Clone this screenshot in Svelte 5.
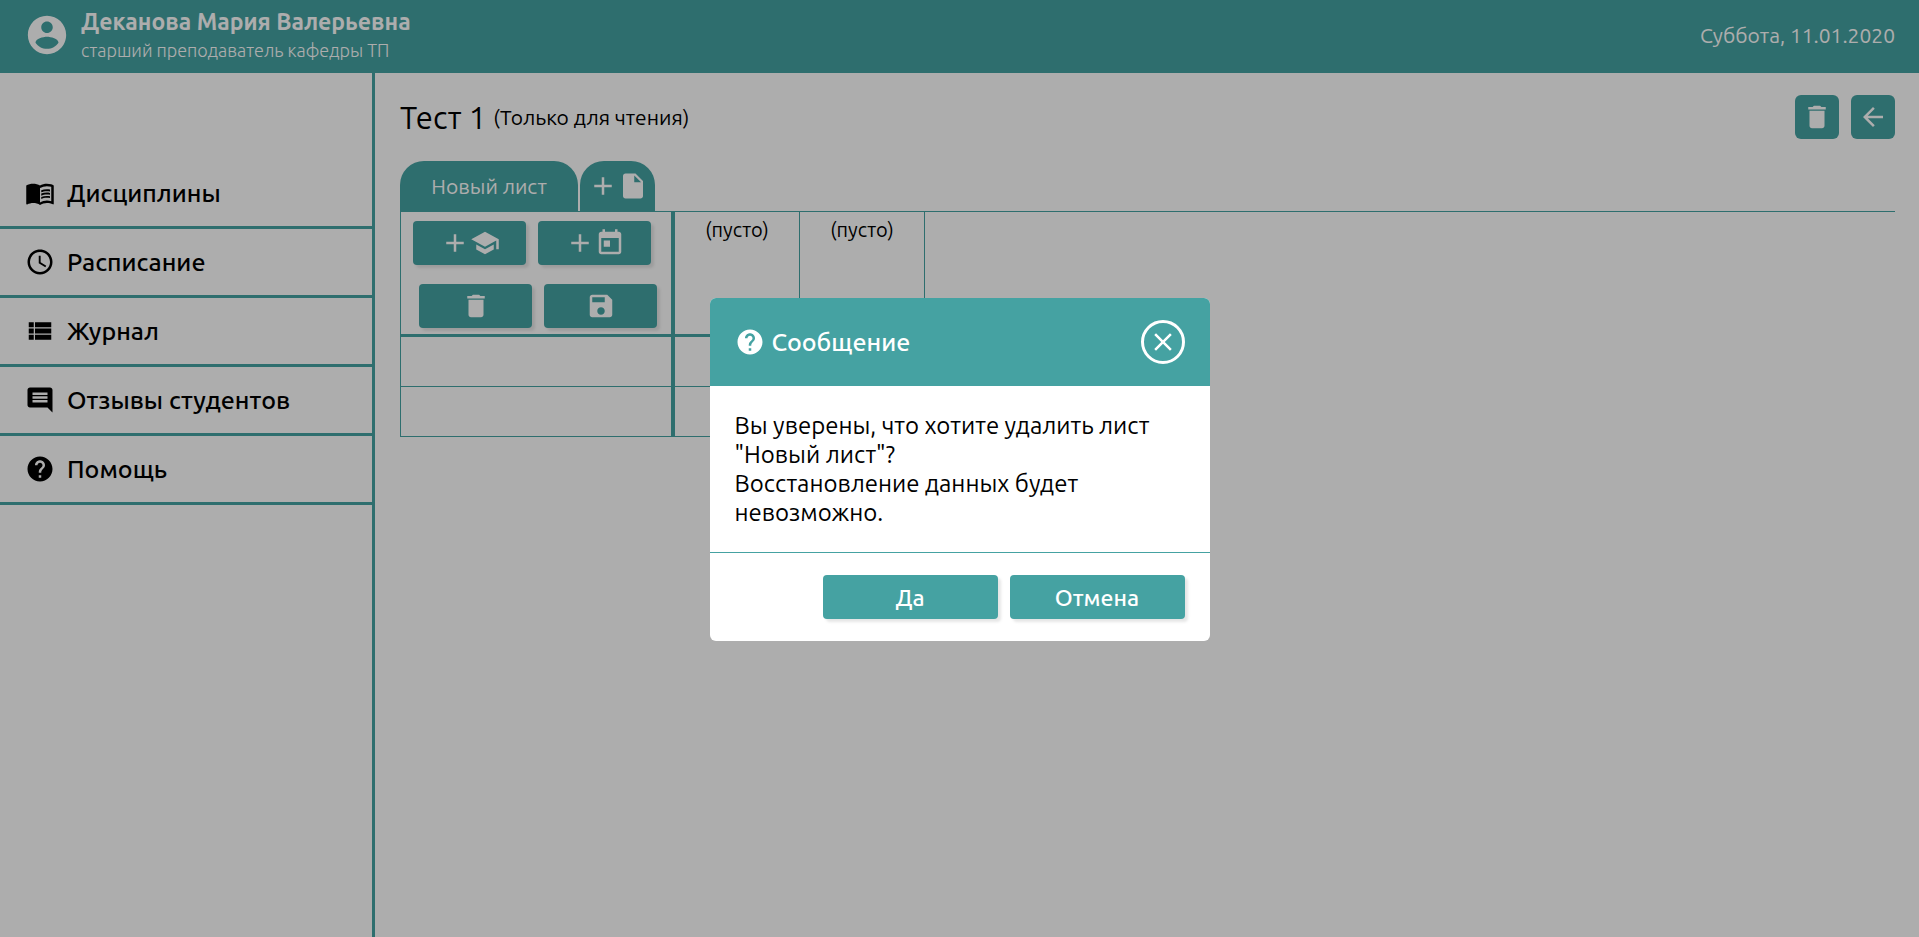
<script>
  const icons = {
    account: 'M12 2C6.480 2 2 6.480 2 12s4.480 10 10 10 10-4.480 10-10S17.520 2 12 2zm0 3c1.660 0 3 1.340 3 3s-1.340 3-3 3-3-1.340-3-3 1.340-3 3-3zm0 14.200c-2.500 0-4.710-1.280-6-3.220.03-1.990 4-3.080 6-3.080 1.990 0 5.970 1.090 6 3.080-1.290 1.940-3.500 3.220-6 3.220z',
    book: 'M21 5c-1.110-.35-2.330-.5-3.500-.5-1.950 0-4.050.4-5.500 1.500-1.450-1.100-3.550-1.500-5.500-1.500S2.450 4.900 1 6v14.650c0 .25.25.5.5.5.1 0 .15-.05.25-.05C3.100 20.450 5.050 20 6.500 20c1.950 0 4.050.4 5.500 1.500 1.350-.85 3.800-1.500 5.500-1.500 1.650 0 3.350.3 4.750 1.050.1.05.15.05.25.05.25 0 .5-.25.5-.5V6c-.6-.45-1.250-.75-2-1zm0 13.500c-1.100-.35-2.300-.5-3.500-.5-1.700 0-4.150.65-5.500 1.500V8c1.350-.85 3.800-1.500 5.500-1.500 1.200 0 2.400.15 3.500.5v11.500zM17.500 10.500c.88 0 1.730.09 2.500.26V9.240c-.79-.15-1.640-.24-2.500-.24-1.700 0-3.240.29-4.500.83v1.660c1.130-.64 2.700-.99 4.500-.99zM13 12.490v1.660c1.130-.64 2.700-.99 4.500-.99.88 0 1.730.09 2.500.26V11.900c-.79-.15-1.640-.24-2.500-.24-1.700 0-3.240.3-4.500.83zM17.500 14.330c-1.700 0-3.240.29-4.500.83v1.660c1.130-.64 2.700-.99 4.500-.99.88 0 1.730.09 2.500.26v-1.520c-.79-.16-1.640-.24-2.500-.24z',
    clock: 'M11.990 2C6.470 2 2 6.480 2 12s4.470 10 9.990 10C17.520 22 22 17.520 22 12S17.520 2 11.990 2zM12 20c-4.420 0-8-3.580-8-8s3.580-8 8-8 8 3.580 8 8-3.580 8-8 8zm.5-13H11v6l5.250 3.150.75-1.230-4.500-2.670z',
    list: 'M3 9h4V5H3v4zm0 5h4v-4H3v4zm0 5h4v-4H3v4zm5-5h13v-4H8v4zm0 5h13v-4H8v4zM8 5v4h13V5H8z',
    comment: 'M21.990 4c0-1.100-.89-2-1.990-2H4c-1.100 0-2 .9-2 2v12c0 1.100.9 2 2 2h14l4 4-.01-18zM18 14H6v-2h12v2zm0-3H6V9h12v2zm0-3H6V6h12v2z',
    help: 'M12 2C6.480 2 2 6.480 2 12s4.480 10 10 10 10-4.480 10-10S17.520 2 12 2zm1 17h-2v-2h2v2zm2.070-7.750l-.9.920C13.450 12.900 13 13.500 13 15h-2v-.5c0-1.100.45-2.100 1.170-2.830l1.240-1.260c.37-.36.59-.86.59-1.410 0-1.100-.9-2-2-2s-2 .9-2 2H8c0-2.210 1.790-4 4-4s4 1.790 4 4c0 .88-.36 1.680-.93 2.250z',
    trash: 'M6 19c0 1.100.9 2 2 2h8c1.100 0 2-.9 2-2V7H6v12zM19 4h-3.500l-1-1h-5l-1 1H5v2h14V4z',
    back: 'M20 11H7.830l5.590-5.590L12 4l-8 8 8 8 1.410-1.410L7.830 13H20v-2z',
    plus: 'M19 13h-6v6h-2v-6H5v-2h6V5h2v6h6v2z',
    file: 'M14 2H6c-1.100 0-2 .9-2 2v16c0 1.100.9 2 2 2h12c1.100 0 2-.9 2-2V8l-6-6zm-1 7V3.500L18.500 9H13z',
    school: 'M5 13.180v4L12 21l7-3.820v-4L12 17l-7-3.820zM12 3L1 9l11 6 9-4.910V17h2V9L12 3z',
    event: 'M19 3h-1V1h-2v2H8V1H6v2H5c-1.110 0-1.990.9-1.990 2L3 19c0 1.100.89 2 2 2h14c1.100 0 2-.9 2-2V5c0-1.100-.9-2-2-2zm0 16H5V8h14v11zM7 10h5v5H7z',
    save: 'M17 3H5c-1.110 0-2 .9-2 2v14c0 1.100.89 2 2 2h14c1.100 0 2-.9 2-2V7l-4-4zm-5 16c-1.660 0-3-1.340-3-3s1.340-3 3-3 3 1.340 3 3-1.340 3-3 3zm3-10H5V5h10v4z',
    close: 'M19 6.410L17.590 5 12 10.590 6.410 5 5 6.410 10.590 12 5 17.590 6.410 19 12 13.410 17.590 19 19 17.590 13.410 12z'
  };

  const menu = [
    ['book', 'Дисциплины'],
    ['clock', 'Расписание'],
    ['list', 'Журнал'],
    ['comment', 'Отзывы студентов'],
    ['help', 'Помощь']
  ];

  let open = $state(true);
  const close = () => (open = false);
</script>

{#snippet icon(name, size = 30)}
  <svg width={size} height={size} viewBox="0 0 24 24" fill="currentColor" aria-hidden="true">
    <path d={icons[name]} />
  </svg>
{/snippet}

<div class="page">
  <header class="topbar">
    <div class="user">
      {@render icon('account', 46)}
      <div class="person">
        <div class="name">Деканова Мария Валерьевна</div>
        <div class="role">старший преподаватель кафедры ТП</div>
      </div>
    </div>
    <div class="date">Суббота, 11.01.2020</div>
  </header>

  <div class="body">
    <nav>
      {#each menu as [glyph, label]}
        <a href="#{glyph}">{@render icon(glyph)}<span>{label}</span></a>
      {/each}
    </nav>

    <main>
      <div class="heading">
        <h1>Тест 1</h1>
        <span class="note">(Только для чтения)</span>
        <div class="tools">
          <button class="square" aria-label="Удалить">{@render icon('trash')}</button>
          <button class="square" aria-label="Назад">{@render icon('back')}</button>
        </div>
      </div>

      <div class="tabs">
        <button class="tab">Новый лист</button>
        <button class="tab add" aria-label="Добавить лист">{@render icon('plus')}{@render icon('file')}</button>
      </div>

      <table>
        <thead>
          <tr>
            <th class="corner">
              <div class="actions">
                <button class="action" aria-label="Добавить студента">{@render icon('plus')}{@render icon('school')}</button>
                <button class="action" aria-label="Добавить дату">{@render icon('plus')}{@render icon('event')}</button>
              </div>
              <div class="actions second">
                <button class="action" aria-label="Удалить лист">{@render icon('trash')}</button>
                <button class="action" aria-label="Сохранить">{@render icon('save')}</button>
              </div>
            </th>
            <th>(пусто)</th>
            <th>(пусто)</th>
          </tr>
        </thead>
        <tbody>
          <tr><td class="student"></td><td></td><td></td></tr>
          <tr><td class="student"></td><td></td><td></td></tr>
        </tbody>
      </table>
    </main>
  </div>
</div>

{#if open}
  <div class="overlay">
    <div class="dialog" role="dialog" aria-modal="true" aria-labelledby="dialog-title">
      <div class="dialog-head">
        {@render icon('help')}
        <h2 id="dialog-title">Сообщение</h2>
        <button class="close" aria-label="Закрыть" onclick={close}>{@render icon('close')}</button>
      </div>
      <p>Вы уверены, что хотите удалить лист "Новый лист"?<br />Восстановление данных будет невозможно.</p>
      <div class="dialog-foot">
        <button onclick={close}>Да</button>
        <button onclick={close}>Отмена</button>
      </div>
    </div>
  </div>
{/if}

<style>
  :global(body) {
    margin: 0;
  }
  .page,
  .overlay {
    --teal: #45a2a2;
    font-family: Ubuntu, 'Noto Sans', sans-serif;
    color: #000;
    box-sizing: border-box;
  }
  .page {
    display: flex;
    flex-direction: column;
    min-height: 100vh;
    background: #fff;
  }
  svg {
    display: block;
    flex: none;
  }
  button {
    display: flex;
    align-items: center;
    justify-content: center;
    box-sizing: border-box;
    padding: 0;
    border: 0;
    font-family: inherit;
    color: #fff;
    background: var(--teal);
    cursor: pointer;
  }
  .topbar {
    display: flex;
    align-items: center;
    justify-content: space-between;
    box-sizing: border-box;
    height: 73px;
    padding: 0 24px 3px;
    color: #fff;
    background: var(--teal);
  }
  .user {
    display: flex;
    align-items: center;
    gap: 11px;
  }
  .person {
    padding-top: 2px;
  }
  .name {
    font-size: 23px;
    line-height: 28px;
    font-weight: 600;
  }
  .role {
    font-size: 18px;
    line-height: 28px;
    font-weight: 300;
  }
  .date {
    font-size: 21px;
  }
  .body {
    display: flex;
    flex: 1;
  }
  nav {
    flex: none;
    width: 372px;
    padding-top: 87px;
    border-right: 3px solid var(--teal);
  }
  nav a {
    display: flex;
    align-items: center;
    gap: 12px;
    height: 66px;
    padding-left: 25px;
    border-bottom: 3px solid var(--teal);
    color: inherit;
    font-size: 25px;
    font-weight: 500;
    text-decoration: none;
  }
  main {
    flex: 1;
    min-width: 0;
    padding: 22px 24px 22px 25px;
  }
  .heading {
    display: flex;
    align-items: center;
    gap: 7px;
    height: 44px;
  }
  h1 {
    margin: 0;
    font-size: 31px;
    font-weight: 400;
  }
  .note {
    font-size: 21px;
  }
  .tools {
    display: flex;
    gap: 12px;
    margin-left: auto;
  }
  .square {
    width: 44px;
    height: 44px;
    border-radius: 6px;
  }
  .tabs {
    display: flex;
    gap: 2px;
    margin-top: 22px;
    border-bottom: 1px solid var(--teal);
  }
  .tab {
    width: 178px;
    height: 50px;
    border-radius: 24px 24px 0 0;
    font-size: 21px;
  }
  .add {
    width: 75px;
  }
  table {
    border-collapse: separate;
    border-spacing: 0;
    border-left: 1px solid var(--teal);
  }
  th,
  td {
    box-sizing: border-box;
    width: 125px;
    padding: 0;
    border-right: 1px solid var(--teal);
    border-bottom: 1px solid var(--teal);
  }
  th {
    padding-top: 4px;
    border-bottom-width: 3px;
    font-size: 20px;
    line-height: 28px;
    font-weight: 400;
    vertical-align: top;
  }
  td {
    height: 50px;
  }
  .corner,
  .student {
    width: 274px;
    border-right-width: 4px;
  }
  .corner {
    padding: 9px 0 6px 12px;
  }
  .actions {
    display: flex;
    gap: 12px;
  }
  .second {
    margin-top: 19px;
    padding-left: 6px;
  }
  .action {
    width: 113px;
    height: 44px;
    border-radius: 4px;
    box-shadow: 3px 3px 3px rgba(0, 0, 0, 0.1);
  }
  .overlay {
    position: fixed;
    inset: 0;
    display: flex;
    align-items: center;
    justify-content: center;
    padding-top: 2px;
    background: rgba(0, 0, 0, 0.32);
  }
  .dialog {
    width: 500px;
    overflow: hidden;
    border-radius: 6px;
    background: #fff;
  }
  .dialog-head {
    display: flex;
    align-items: center;
    gap: 7px;
    height: 88px;
    padding: 0 25px;
    color: #fff;
    background: var(--teal);
  }
  h2 {
    margin: 0;
    font-size: 25px;
    font-weight: 500;
  }
  .close {
    width: 44px;
    height: 44px;
    margin-left: auto;
    border: 3px solid #fff;
    border-radius: 50%;
  }
  p {
    margin: 0;
    padding: 25px;
    font-size: 24px;
    line-height: 29px;
  }
  .dialog-foot {
    display: flex;
    justify-content: flex-end;
    gap: 12px;
    padding: 22px 25px;
    border-top: 1px solid var(--teal);
  }
  .dialog-foot button {
    width: 175px;
    height: 44px;
    border-radius: 4px;
    font-size: 23px;
    font-weight: 500;
    box-shadow: 3px 3px 3px rgba(0, 0, 0, 0.1);
  }
</style>
